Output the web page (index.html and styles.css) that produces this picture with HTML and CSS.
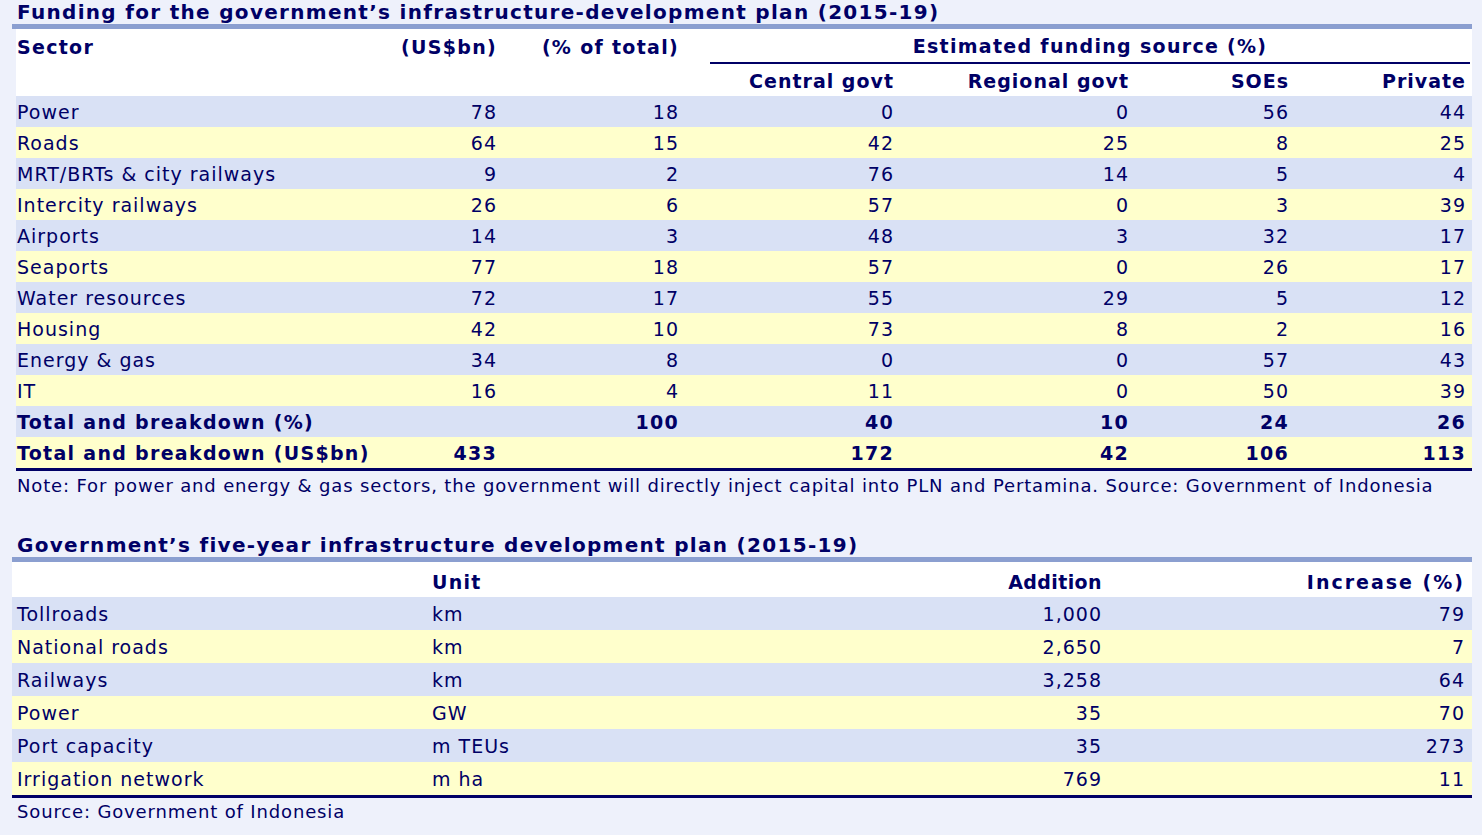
FILE: index.html
```html
<!DOCTYPE html>
<html>
<head>
<meta charset="utf-8">
<link rel="stylesheet" href="styles.css">
</head>
<body>
<div class="page">
  <h2 class="title">Funding for the government’s infrastructure-development plan (2015-19)</h2>
  <table class="t1">
    <colgroup>
      <col class="c1"><col class="c2"><col class="c3"><col class="c4"><col class="c5"><col class="c6"><col class="c7">
    </colgroup>
    <thead>
      <tr class="h1">
        <th class="l">Sector</th>
        <th class="r">(US$bn)</th>
        <th class="r">(% of total)</th>
        <th colspan="4" class="group"><div class="group-in">Estimated funding source (%)</div></th>
      </tr>
      <tr class="h2">
        <th></th><th></th><th></th>
        <th class="r">Central govt</th>
        <th class="r">Regional govt</th>
        <th class="r">SOEs</th>
        <th class="r">Private</th>
      </tr>
    </thead>
    <tbody>
      <tr class="b"><td>Power</td><td>78</td><td>18</td><td>0</td><td>0</td><td>56</td><td>44</td></tr>
      <tr class="y"><td>Roads</td><td>64</td><td>15</td><td>42</td><td>25</td><td>8</td><td>25</td></tr>
      <tr class="b"><td>MRT/BRTs &amp; city railways</td><td>9</td><td>2</td><td>76</td><td>14</td><td>5</td><td>4</td></tr>
      <tr class="y"><td>Intercity railways</td><td>26</td><td>6</td><td>57</td><td>0</td><td>3</td><td>39</td></tr>
      <tr class="b"><td>Airports</td><td>14</td><td>3</td><td>48</td><td>3</td><td>32</td><td>17</td></tr>
      <tr class="y"><td>Seaports</td><td>77</td><td>18</td><td>57</td><td>0</td><td>26</td><td>17</td></tr>
      <tr class="b"><td>Water resources</td><td>72</td><td>17</td><td>55</td><td>29</td><td>5</td><td>12</td></tr>
      <tr class="y"><td>Housing</td><td>42</td><td>10</td><td>73</td><td>8</td><td>2</td><td>16</td></tr>
      <tr class="b"><td>Energy &amp; gas</td><td>34</td><td>8</td><td>0</td><td>0</td><td>57</td><td>43</td></tr>
      <tr class="y"><td>IT</td><td>16</td><td>4</td><td>11</td><td>0</td><td>50</td><td>39</td></tr>
      <tr class="b bold"><td>Total and breakdown (%)</td><td></td><td>100</td><td>40</td><td>10</td><td>24</td><td>26</td></tr>
      <tr class="y bold"><td>Total and breakdown (US$bn)</td><td>433</td><td></td><td>172</td><td>42</td><td>106</td><td>113</td></tr>
    </tbody>
  </table>
  <p class="note">Note: For power and energy &amp; gas sectors, the government will directly inject capital into PLN and Pertamina. Source: Government of Indonesia</p>

  <h2 class="title second">Government’s five-year infrastructure development plan (2015-19)</h2>
  <table class="t2">
    <colgroup>
      <col class="d1"><col class="d2"><col class="d3"><col class="d4">
    </colgroup>
    <thead>
      <tr>
        <th></th>
        <th class="l">Unit</th>
        <th class="r">Addition</th>
        <th class="r">Increase (%)</th>
      </tr>
    </thead>
    <tbody>
      <tr class="b"><td>Tollroads</td><td>km</td><td>1,000</td><td>79</td></tr>
      <tr class="y"><td>National roads</td><td>km</td><td>2,650</td><td>7</td></tr>
      <tr class="b"><td>Railways</td><td>km</td><td>3,258</td><td>64</td></tr>
      <tr class="y"><td>Power</td><td>GW</td><td>35</td><td>70</td></tr>
      <tr class="b"><td>Port capacity</td><td>m TEUs</td><td>35</td><td>273</td></tr>
      <tr class="y"><td>Irrigation network</td><td>m ha</td><td>769</td><td>11</td></tr>
    </tbody>
  </table>
  <p class="note source">Source: Government of Indonesia</p>
</div>
</body>
</html>
```
FILE: styles.css
```css
html, body {
  margin: 0;
  padding: 0;
}
body {
  background: #eef1fb;
  font-family: "DejaVu Sans", Verdana, sans-serif;
  font-size: 19px;
  letter-spacing: 1px;
  color: #000066;
}
.page {
  width: 1460px;
  padding-left: 12px;
}
.title {
  margin: 0;
  padding: 0 0 0 5px;
  font-size: 20px;
  letter-spacing: 1.3px;
  font-weight: bold;
  line-height: 24px;
  height: 24px;
  border-bottom: 5px solid #8b9fd0;
  white-space: nowrap;
}
.title.second {
  margin-top: 32px;
}
table {
  border-collapse: collapse;
  table-layout: fixed;
  background: #ffffff;
}
.t1 {
  width: 1456px;
  margin-left: 4px;
}
.t1 .c1 { width: 384px; }
.t1 .c2 { width: 103px; }
.t1 .c3 { width: 182px; }
.t1 .c4 { width: 215px; }
.t1 .c5 { width: 235px; }
.t1 .c6 { width: 160px; }
.t1 .c7 { width: 177px; }

th {
  font-weight: bold;
  letter-spacing: 1.3px;
  padding: 0;
  white-space: nowrap;
}
th.l { text-align: left; }
th.r { text-align: right; }
td {
  padding: 0;
  text-align: right;
  white-space: nowrap;
}
td:first-child { text-align: left; }
.bold td { font-weight: bold; letter-spacing: 1.3px; }

.t1 th, .t1 td { padding-right: 6px; }
.t1 th:first-child, .t1 td:first-child { padding-left: 1px; padding-right: 0; }
.t1 .h1 th { padding-top: 1px; line-height: 34px; vertical-align: top; }
.t1 .h1 th.group { padding: 0 2px 0 25px; }
.group-in {
  text-align: center;
  border-bottom: 2px solid #000066;
  line-height: 35px;
  height: 33px;
}
.t1 .h2 th { padding-top: 3px; line-height: 29px; }
.t1 .h2 th.r { letter-spacing: 1px; }
.t1 tbody td { padding-top: 1px; line-height: 30px; }
.t1 tbody tr:last-child td { border-bottom: 3px solid #000066; }

tr.b { background: #d9e1f5; }
tr.y { background: #ffffcc; }

.t2 {
  width: 1460px;
}
.t2 .d1 { width: 415px; }
.t2 .d2 { width: 380px; }
.t2 .d3 { width: 301px; }
.t2 .d4 { width: 364px; }
.t2 th, .t2 td { padding-left: 5px; }
.t2 td:nth-child(2) { text-align: left; }
.t2 th:nth-child(3), .t2 td:nth-child(3) { padding-right: 6px; }
.t2 th:nth-child(4), .t2 td:nth-child(4) { padding-right: 7px; }
.t2 thead th { padding-top: 6px; line-height: 29px; }
.t2 thead th:nth-child(3) { letter-spacing: 0.4px; }
.t2 thead th:nth-child(4) { letter-spacing: 2px; }
.t2 tbody td { padding-top: 2px; line-height: 31px; }
.t2 tbody tr:last-child td { border-bottom: 3px solid #000066; }

.note {
  margin: 0;
  padding-left: 5px;
  font-size: 18px;
  letter-spacing: 0.85px;
  line-height: 30px;
  white-space: nowrap;
}
.note.source {
  line-height: 28px;
}
```
